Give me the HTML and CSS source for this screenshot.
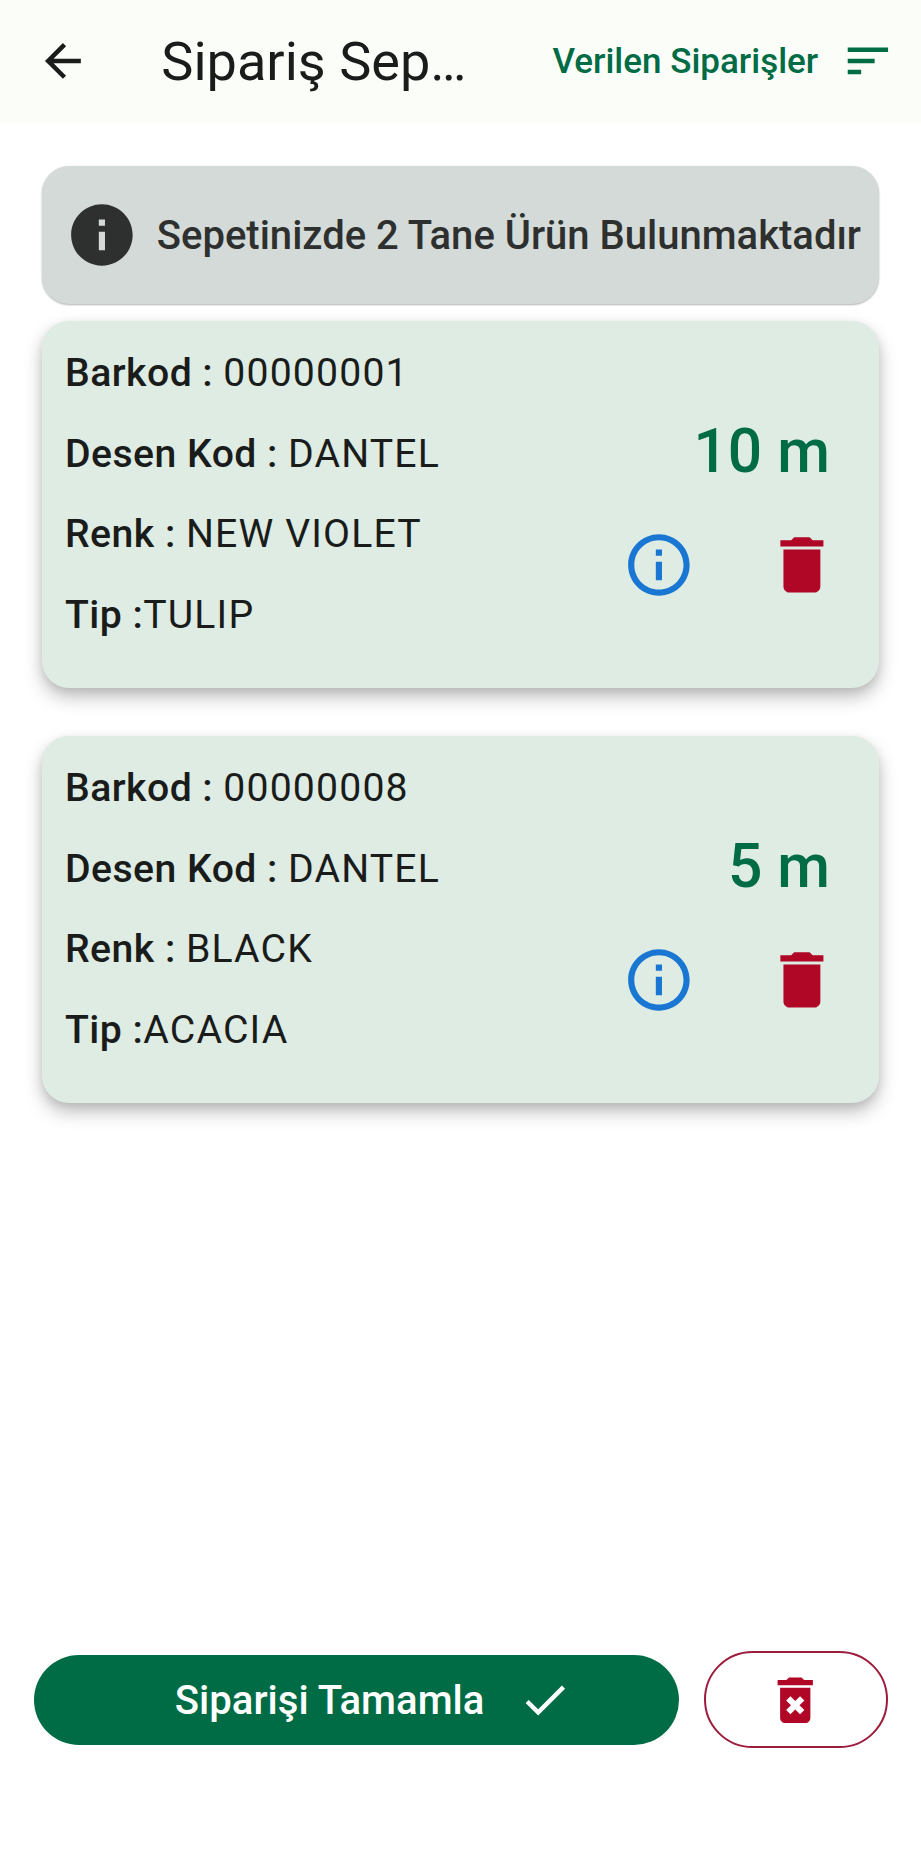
FILE: index.html
```html
<!DOCTYPE html>
<html lang="tr">
<head>
<meta charset="utf-8">
<title>Sipariş Sepeti</title>
<link rel="stylesheet" href="styles.css">
</head>
<body>
<header class="app-bar">
  <svg class="icon back" viewBox="0 0 24 24"><path d="M20 11H7.83l5.59-5.59L12 4l-8 8 8 8 1.41-1.41L7.83 13H20v-2z"/></svg>
  <h1 class="title">Sipariş Sep…</h1>
  <div class="orders"><span class="orders-label">Verilen Siparişler</span>
    <svg class="icon" viewBox="0 0 24 24"><path d="M3 18h6v-2H3v2zM3 6v2h18V6H3zm0 7h12v-2H3v2z"/></svg>
  </div>
</header>
<main class="content">
  <section class="banner">
    <svg class="icon-lg" viewBox="0 0 24 24"><path d="M12 2C6.48 2 2 6.48 2 12s4.48 10 10 10 10-4.48 10-10S17.52 2 12 2zm1 15h-2v-6h2v6zm0-8h-2V7h2v2z"/></svg>
    <span class="banner-text">Sepetinizde 2 Tane Ürün Bulunmaktadır</span>
  </section>
  <article class="card">
    <div class="details">
      <p class="row"><b>Barkod : </b>00000001</p>
      <p class="row"><b>Desen Kod : </b>DANTEL</p>
      <p class="row"><b>Renk : </b>NEW VIOLET</p>
      <p class="row"><b>Tip :</b>TULIP</p>
    </div>
    <div class="side">
      <div class="amount">10 m</div>
      <div class="actions">
        <svg class="icon-lg info" viewBox="0 0 24 24"><path d="M11 7h2v2h-2zm0 4h2v6h-2zm1-9C6.48 2 2 6.48 2 12s4.48 10 10 10 10-4.48 10-10S17.52 2 12 2zm0 18c-4.41 0-8-3.59-8-8s3.59-8 8-8 8 3.59 8 8-3.59 8-8 8z"/></svg>
        <svg class="icon-lg trash" viewBox="0 0 24 24"><path d="M6 19c0 1.1.9 2 2 2h8c1.1 0 2-.9 2-2V7H6v12zM19 4h-3.5l-1-1h-5l-1 1H5v2h14V4z"/></svg>
      </div>
    </div>
  </article>
  <article class="card">
    <div class="details">
      <p class="row"><b>Barkod : </b>00000008</p>
      <p class="row"><b>Desen Kod : </b>DANTEL</p>
      <p class="row"><b>Renk : </b>BLACK</p>
      <p class="row"><b>Tip :</b>ACACIA</p>
    </div>
    <div class="side">
      <div class="amount">5 m</div>
      <div class="actions">
        <svg class="icon-lg info" viewBox="0 0 24 24"><path d="M11 7h2v2h-2zm0 4h2v6h-2zm1-9C6.48 2 2 6.48 2 12s4.48 10 10 10 10-4.48 10-10S17.52 2 12 2zm0 18c-4.41 0-8-3.59-8-8s3.59-8 8-8 8 3.59 8 8-3.59 8-8 8z"/></svg>
        <svg class="icon-lg trash" viewBox="0 0 24 24"><path d="M6 19c0 1.1.9 2 2 2h8c1.1 0 2-.9 2-2V7H6v12zM19 4h-3.5l-1-1h-5l-1 1H5v2h14V4z"/></svg>
      </div>
    </div>
  </article>
</main>
<footer class="footer">
  <button class="complete"><span class="complete-label">Siparişi Tamamla</span>
    <svg class="icon" viewBox="0 0 24 24"><path d="M9 16.2L4.8 12l-1.4 1.4L9 19 21 7l-1.4-1.4L9 16.2z"/></svg>
  </button>
  <button class="clear" aria-label="Sepeti boşalt">
    <svg class="icon-md" viewBox="0 0 24 24"><path d="M6 19c0 1.1.9 2 2 2h8c1.1 0 2-.9 2-2V7H6v12zM19 4h-3.5l-1-1h-5l-1 1H5v2h14V4z"/><path class="cross" d="M9.25 11.25l5.5 5.5M14.75 11.25l-5.5 5.5"/></svg>
  </button>
</footer>
</body>
</html>
```
FILE: styles.css
```css
* { box-sizing: border-box; }
body {
  margin: 0;
  height: 1862px;
  display: flex;
  flex-direction: column;
  background: #fff;
  color: #191c1a;
  font-family: Roboto, "Noto Sans", sans-serif;
}
h1, p { margin: 0; white-space: nowrap; }
svg { display: block; flex: none; fill: currentColor; }
.icon { width: 53.8px; height: 53.8px; }
.icon-md { width: 60.5px; height: 60.5px; }
.icon-lg { width: 73.8px; height: 73.8px; }

.app-bar {
  height: 123px;
  display: flex;
  align-items: center;
  padding: 0 26px 1px 36px;
  background: #fbfdf8;
}
.title {
  margin-left: 71.5px;
  padding-top: 1px;
  font-size: 54.1px;
  font-weight: 400;
  line-height: 64px;
}
.orders {
  margin-left: auto;
  display: flex;
  align-items: center;
  gap: 23px;
  color: #006c45;
}
.orders-label { padding-top: 1px; font-size: 35px; font-weight: 500; white-space: nowrap; }

.content { flex: 1; padding: 43px 42px 0; }
.banner {
  height: 138px;
  display: flex;
  align-items: center;
  padding: 0 0 0 23px;
  gap: 18px;
  border-radius: 27px;
  background: #d4dad7;
  color: #2e302f;
  box-shadow: 0 1px 2px rgba(0, 0, 0, .3);
}
.banner-text { font-size: 40px; font-weight: 500; white-space: nowrap; }
.card {
  height: 367px;
  margin-top: 17px;
  display: flex;
  justify-content: space-between;
  padding: 12px 47px 0 23px;
  border-radius: 27px;
  background: #dfece3;
  box-shadow: 0 9px 18px rgba(0, 0, 0, .25), 0 3px 8px rgba(0, 0, 0, .08);
}
.card + .card { margin-top: 48px; }
.row {
  font-size: 39.2px;
  line-height: 80.6px;
  letter-spacing: 1.15px;
  white-space: pre;
}
.row b { font-weight: 500; letter-spacing: .45px; }
.side {
  display: flex;
  flex-direction: column;
  align-items: flex-end;
  padding-top: 83px;
}
.amount {
  margin-right: 2px;
  font-size: 60.5px;
  font-weight: 500;
  line-height: 72px;
  color: #006c45;
}
.actions { display: flex; gap: 69px; margin: 40px -7px 0 0; }
.info { color: #1976d2; }
.trash { color: #b00727; }

.footer {
  height: 211px;
  display: flex;
  align-items: flex-start;
  padding-left: 33.5px;
  gap: 25px;
}
button { border: 0; padding: 0; display: flex; align-items: center; justify-content: center; font-family: inherit; }
.complete {
  width: 645px;
  height: 90px;
  margin-top: 4px;
  padding-left: 35px;
  gap: 34px;
  border-radius: 45px;
  background: #006c45;
  color: #fff;
}
.complete-label { font-size: 40.1px; font-weight: 500; }
.clear {
  width: 184px;
  height: 97px;
  padding-top: 1px;
  border: 2px solid #9c1c3c;
  border-radius: 49px;
  background: #fff;
  color: #b00727;
}
.cross { fill: none; stroke: #fff; stroke-width: 2.4; }
```
